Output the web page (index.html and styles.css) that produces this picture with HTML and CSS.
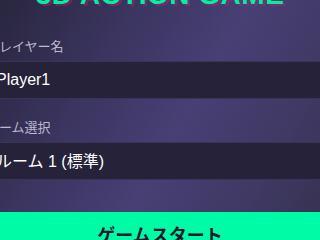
FILE: index.html
```html
<!DOCTYPE html>
<html>
	<head>
		<meta charset="utf-8" />
		<title>3D ACTION GAME</title>
		<link rel="stylesheet" href="styles.css">
	</head>
	<body>
		<div class="panel" id="lobby">
			<h1 class="title">3D ACTION GAME</h1>
			<div class="form-group">
				<label for="playerName">プレイヤー名</label>
				<input type="text" class="form-control" id="playerName" value="Player1">
			</div>
			<div class="form-group">
				<label for="room">ルーム選択</label>
				<select class="form-control" id="room">
					<option>ルーム 1 (標準)</option>
					<option>ルーム 2</option>
					<option>ルーム 3</option>
				</select>
			</div>
			<button class="start-btn" id="startButton">ゲームスタート</button>
		</div>
	</body>
</html>
```

FILE: styles.css
```css
html, body
{
	height: 100%;
}
body
{
	margin: 0;
	overflow: hidden;
	display: flex;
	justify-content: center;
	align-items: flex-start;
	background: linear-gradient(120deg, #29263e 0%, #3b3560 30%, #483f74 55%, #3f3963 80%, #36324f 100%);
	font-family: "Liberation Sans", "Noto Sans CJK JP", sans-serif;
}
.panel
{
	flex-shrink: 0;
	width: 348px;
	margin-top: -21px;
}
.title
{
	margin: 0 0 27px 0;
	font-size: 28px;
	line-height: 32px;
	font-weight: bold;
	letter-spacing: 0.5px;
	text-align: center;
	color: #00f2a0;
	text-shadow: 2px 2px 0 rgba(200, 20, 120, 0.45);
}
.form-group
{
	margin-bottom: 20px;
}
.form-group label
{
	display: block;
	margin-bottom: 5px;
	font-size: 13px;
	line-height: 18px;
	color: #bdb8d0;
}
.form-control
{
	display: block;
	box-sizing: border-box;
	width: 100%;
	height: 38px;
	padding: 0 10px 0 9px;
	border: 1px solid #3a3556;
	border-radius: 4px;
	background: #252239;
	color: #ffffff;
	font-family: "Liberation Sans", "Noto Sans CJK JP", sans-serif;
	font-size: 16px;
	outline: none;
	appearance: none;
	-webkit-appearance: none;
}
.start-btn
{
	display: block;
	width: 100%;
	margin-top: 32px;
	padding: 12px 0;
	border: none;
	border-radius: 4px;
	background: #00fba6;
	color: #1d1a2c;
	font-family: "Liberation Sans", "Noto Sans CJK JP", sans-serif;
	font-size: 18px;
	line-height: 24px;
	font-weight: bold;
	cursor: pointer;
}
```
